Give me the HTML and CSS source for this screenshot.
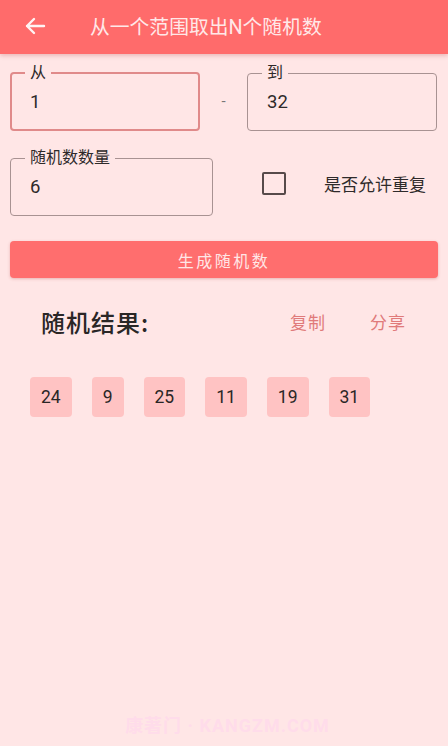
FILE: index.html
```html
<!DOCTYPE html>
<html lang="zh-CN">
<head>
<meta charset="utf-8">
<title>从一个范围取出N个随机数</title>
<link rel="stylesheet" href="styles.css">
</head>
<body>
<header class="appbar">
  <svg class="back" width="22" height="18" viewBox="0 0 22 18" aria-hidden="true">
    <path d="M20 9H3M10 2L3 9l7 7" fill="none" stroke="#fff3f3" stroke-width="2.4" stroke-linecap="round" stroke-linejoin="round"/>
  </svg>
  <h1 class="title">从一个范围取出N个随机数</h1>
</header>
<main class="content">
  <div class="range-row">
    <fieldset class="field field-focused">
      <legend class="field-label">从</legend>
      <div class="field-value">1</div>
    </fieldset>
    <div class="dash">-</div>
    <fieldset class="field">
      <legend class="field-label">到</legend>
      <div class="field-value">32</div>
    </fieldset>
  </div>
  <div class="count-row">
    <fieldset class="field field-count">
      <legend class="field-label">随机数数量</legend>
      <div class="field-value">6</div>
    </fieldset>
    <span class="checkbox"></span>
    <span class="check-label">是否允许重复</span>
  </div>
  <button class="generate">生成随机数</button>
  <div class="result-head">
    <span class="result-title">随机结果:</span>
    <span class="action">复制</span>
    <span class="action">分享</span>
  </div>
  <div class="chips">
    <span class="chip">24</span>
    <span class="chip">9</span>
    <span class="chip">25</span>
    <span class="chip">11</span>
    <span class="chip">19</span>
    <span class="chip">31</span>
  </div>
  <div class="watermark">康著门 · KANGZM.COM</div>
</main>
</body>
</html>
```
FILE: styles.css
```css
* { box-sizing: border-box; }
html, body {
  margin: 0;
  padding: 0;
  background: #ffe6e6;
  font-family: Roboto, "Noto Sans CJK SC", sans-serif;
  color: #2e2a2a;
}
body { width: 448px; height: 746px; overflow: hidden; }

.appbar {
  height: 54px;
  background: #ff6b6b;
  display: flex;
  align-items: center;
  padding-left: 24px;
  box-shadow: 0 2px 4px rgba(180, 60, 60, 0.25);
}
.back { display: block; margin-top: -3px; }
.title {
  margin: -3px 0 0 44px;
  font-size: 19.8px;
  font-weight: 400;
  color: #ffe8e8;
  letter-spacing: 0;
}

.content { padding: 0 11px 0 10px; }

.range-row {
  display: flex;
  align-items: flex-start;
  margin-top: 11px;
}
.field {
  margin: 0;
  width: 190px;
  border: 1px solid #a89292;
  border-radius: 4px;
  padding: 0 0 9px 19px;
  min-width: 0;
}
.field-focused {
  border: 2px solid #e08a8a;
  padding: 0 0 8px 18px;
}
.field-label {
  font-size: 16px;
  line-height: 16px;
  padding: 0 5px;
  margin-left: -5px;
  color: #2e2a2a;
}
.field-value {
  height: 40px;
  padding-top: 2px;
  line-height: 38px;
  font-size: 18.5px;
}
.dash {
  flex: 1;
  text-align: center;
  font-size: 15px;
  line-height: 16px;
  color: #777;
  margin-top: 28px;
}

.count-row {
  display: flex;
  align-items: center;
  margin-top: 19px;
}
.field-count { width: 203px; }
.checkbox {
  width: 24px;
  height: 23px;
  border: 2.5px solid #574a4a;
  border-radius: 2px;
  margin-left: 49px;
  margin-top: 1px;
}
.check-label {
  margin-left: 38px;
  margin-top: 1px;
  font-size: 17px;
  color: #2e2a2a;
}

.generate {
  display: block;
  width: 428px;
  height: 37px;
  margin-top: 25px;
  border: none;
  border-radius: 4px;
  background: #ff6e6e;
  color: #ffe6e6;
  font-family: "Noto Sans CJK SC", sans-serif;
  font-size: 16px;
  letter-spacing: 2.5px;
  box-shadow: 0 1px 3px rgba(180, 60, 60, 0.3);
}

.result-head {
  display: flex;
  align-items: center;
  margin-top: 30px;
  padding-left: 31px;
  padding-right: 31px;
  height: 26px;
}
.result-title {
  flex: 1;
  font-size: 24px;
  font-weight: 500;
  letter-spacing: 1px;
  color: #2a2626;
  font-family: "Noto Sans CJK SC", sans-serif;
}
.action {
  font-size: 17px;
  color: #e07a7a;
  margin-left: 44px;
  letter-spacing: 1px;
}

.chips {
  display: flex;
  gap: 20px;
  margin-top: 43px;
  padding-left: 20px;
}
.chip {
  height: 40px;
  line-height: 40px;
  padding: 0 11px;
  background: #ffc3c3;
  border-radius: 4px;
  font-size: 17.5px;
  color: #2a2626;
}

.watermark {
  margin-top: 294px;
  text-align: center;
  font-size: 18px;
  font-weight: 700;
  color: #ffdcea;
  letter-spacing: 1px;
  margin-left: 8px;
}
```
